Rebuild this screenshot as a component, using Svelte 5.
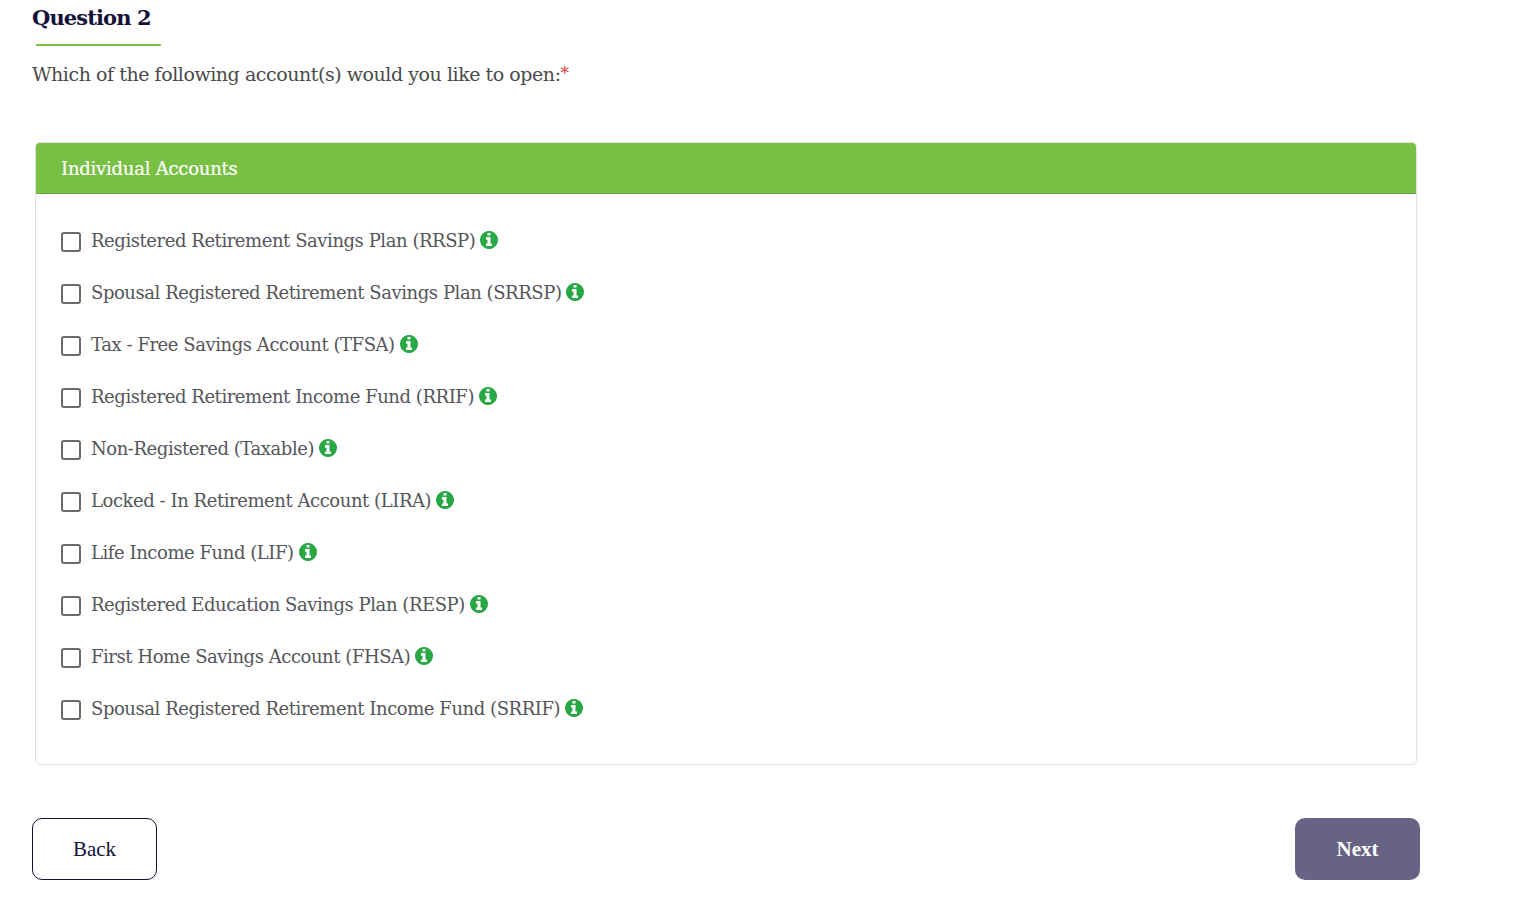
<script>
  const accounts = [
    'Registered Retirement Savings Plan (RRSP)',
    'Spousal Registered Retirement Savings Plan (SRRSP)',
    'Tax - Free Savings Account (TFSA)',
    'Registered Retirement Income Fund (RRIF)',
    'Non-Registered (Taxable)',
    'Locked - In Retirement Account (LIRA)',
    'Life Income Fund (LIF)',
    'Registered Education Savings Plan (RESP)',
    'First Home Savings Account (FHSA)',
    'Spousal Registered Retirement Income Fund (SRRIF)'
  ];
</script>

<main class="page">
  <h2 class="title">Question 2</h2>
  <div class="rule"></div>
  <p class="question">Which of the following account(s) would you like to open:<span class="req">*</span></p>

  <section class="card">
    <header class="card-head">Individual Accounts</header>
    <div class="card-body">
      {#each accounts as account}
        <label class="row">
          <input type="checkbox" />
          <span class="label">{account}</span>
          <svg class="info" viewBox="128 128 1536 1536" aria-hidden="true">
            <path fill="#28a745" d="M1152 1376v-160q0-14-9-23t-23-9h-96v-512q0-14-9-23t-23-9h-320q-14 0-23 9t-9 23v160q0 14 9 23t23 9h96v320h-96q-14 0-23 9t-9 23v160q0 14 9 23t23 9h448q14 0 23-9t9-23zm-128-896v-160q0-14-9-23t-23-9h-192q-14 0-23 9t-9 23v160q0 14 9 23t23 9h192q14 0 23-9t9-23zm640 416q0 209-103 385.5t-279.5 279.5-385.5 103-385.5-103-279.5-279.5-103-385.5 103-385.5 279.5-279.5 385.5-103 385.5 103 279.5 279.5 103 385.5z"/>
          </svg>
        </label>
      {/each}
    </div>
  </section>

  <div class="actions">
    <button class="btn back">Back</button>
    <button class="btn next">Next</button>
  </div>
</main>

<style>
  :global(body) {
    margin: 0;
    background: #fff;
  }

  .page {
    width: 1388px;
    height: 898px;
    padding-left: 32px;
    font-family: "DejaVu Serif", serif;
    overflow: hidden;
  }

  .title {
    margin: 0;
    padding-top: 5px;
    font-size: 21px;
    line-height: 26px;
    font-weight: 700;
    color: #14123a;
    letter-spacing: -0.9px;
  }

  .rule {
    width: 125px;
    height: 2px;
    margin: 13px 0 0 4px;
    background: #7ac143;
  }

  .question {
    margin: 14px 0 0;
    font-size: 19px;
    line-height: 26px;
    color: #4a4a4a;
    letter-spacing: -0.45px;
  }

  .req {
    color: #e53935;
    vertical-align: 2px;
    font-size: 17px;
  }

  .card {
    width: 1382px;
    height: 623px;
    box-sizing: border-box;
    margin: 55px 0 0 3px;
    border: 1px solid #e2e2e2;
    border-radius: 5px;
    overflow: hidden;
  }

  .card-head {
    height: 51px;
    box-sizing: border-box;
    padding-left: 25px;
    background: #78c044;
    border-bottom: 1px solid #6aa93c;
    color: #fff;
    font-size: 18px;
    line-height: 52px;
    letter-spacing: -0.23px;
    -webkit-text-stroke: 0.2px #fff;
  }

  .card-body {
    padding: 20px 25px 0;
    display: flex;
    flex-direction: column;
  }

  .row {
    height: 52px;
    display: flex;
    align-items: center;
  }

  .row input {
    appearance: none;
    width: 20px;
    height: 20px;
    margin: 4px 10px 0 0;
    box-sizing: border-box;
    border: 2px solid #6b6b6b;
    border-radius: 3px;
    background: #fff;
  }

  .label {
    font-size: 18px;
    color: #55565a;
    letter-spacing: -0.44px;
  }

  .info {
    width: 18px;
    height: 18px;
    margin-left: 5px;
    margin-top: -1px;
  }

  .actions {
    display: flex;
    justify-content: space-between;
    margin-top: 53px;
  }

  .btn {
    width: 125px;
    height: 62px;
    border-radius: 10px;
    font-family: "Liberation Serif", serif;
    font-size: 21px;
    box-sizing: border-box;
  }

  .back {
    background: #fff;
    border: 1px solid #14123a;
    color: #14123a;
  }

  .next {
    background: #666384;
    border: 0;
    color: #fff;
    font-weight: 700;
  }
</style>
